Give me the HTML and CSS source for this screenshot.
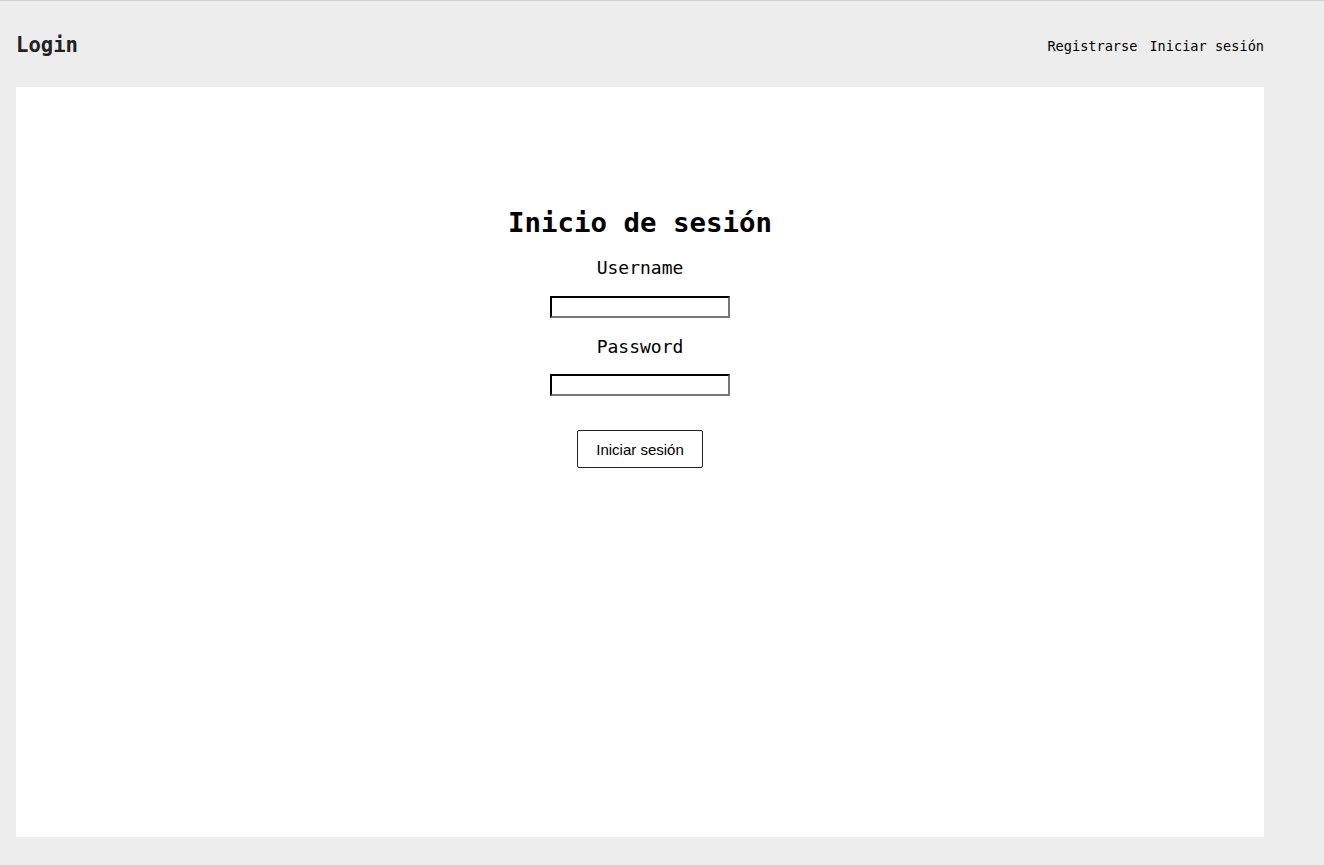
FILE: index.html
```html
<!DOCTYPE html>
<html lang="es">
<head>
<meta charset="utf-8">
<title>Login</title>
<link rel="stylesheet" href="styles.css">
</head>
<body>
<div class="page">
  <header class="topbar">
    <div class="brand">Login</div>
    <nav class="nav">
      <a href="#">Registrarse</a>
      <a href="#">Iniciar sesión</a>
    </nav>
  </header>
  <main class="card">
    <form class="login">
      <h1 class="title">Inicio de sesión</h1>
      <label class="label" for="u">Username</label>
      <input class="field" id="u" type="text">
      <label class="label" for="p">Password</label>
      <input class="field field-last" id="p" type="password">
      <button class="btn" type="button">Iniciar sesión</button>
    </form>
  </main>
</div>
</body>
</html>
```
FILE: styles.css
```css
html, body {
  margin: 0;
  padding: 0;
  height: 100%;
}
body {
  background: #ededed;
  border-top: 1px solid #cfcfcf;
  box-sizing: border-box;
  font-family: "DejaVu Sans Mono", "Liberation Mono", monospace;
  color: #000;
}
.page {
  padding: 0 16px;
  width: 1248px;
}
.topbar {
  height: 86px;
  display: flex;
  align-items: center;
  justify-content: space-between;
}
.brand {
  font-size: 20.6px;
  font-weight: bold;
  color: #222;
  margin-top: 2px;
}
.nav {
  display: flex;
  gap: 12px;
  font-size: 13.6px;
  margin-top: 4px;
}
.nav a {
  color: #000;
  text-decoration: none;
}
.card {
  background: #fff;
  height: 750px;
}
.login {
  display: flex;
  flex-direction: column;
  align-items: center;
  padding-top: 119px;
}
.title {
  font-size: 27.4px;
  font-weight: bold;
  line-height: 34px;
  margin: 0 0 16px;
}
.label {
  font-size: 18px;
  line-height: 24px;
  display: block;
}
.field {
  width: 180px;
  height: 22px;
  box-sizing: border-box;
  border: 2px inset #767676;
  border-color: #222 #767676 #767676 #222;
  margin: 16px 0 17px;
  padding: 0;
  background: #fff;
}
.field-last {
  margin-top: 15px;
}
.btn {
  margin-top: 17px;
  width: 126px;
  height: 38px;
  background: #fff;
  border: 1px solid #222;
  border-radius: 2px;
  font-family: "Liberation Sans", Arial, sans-serif;
  font-size: 15px;
  color: #000;
}
```
